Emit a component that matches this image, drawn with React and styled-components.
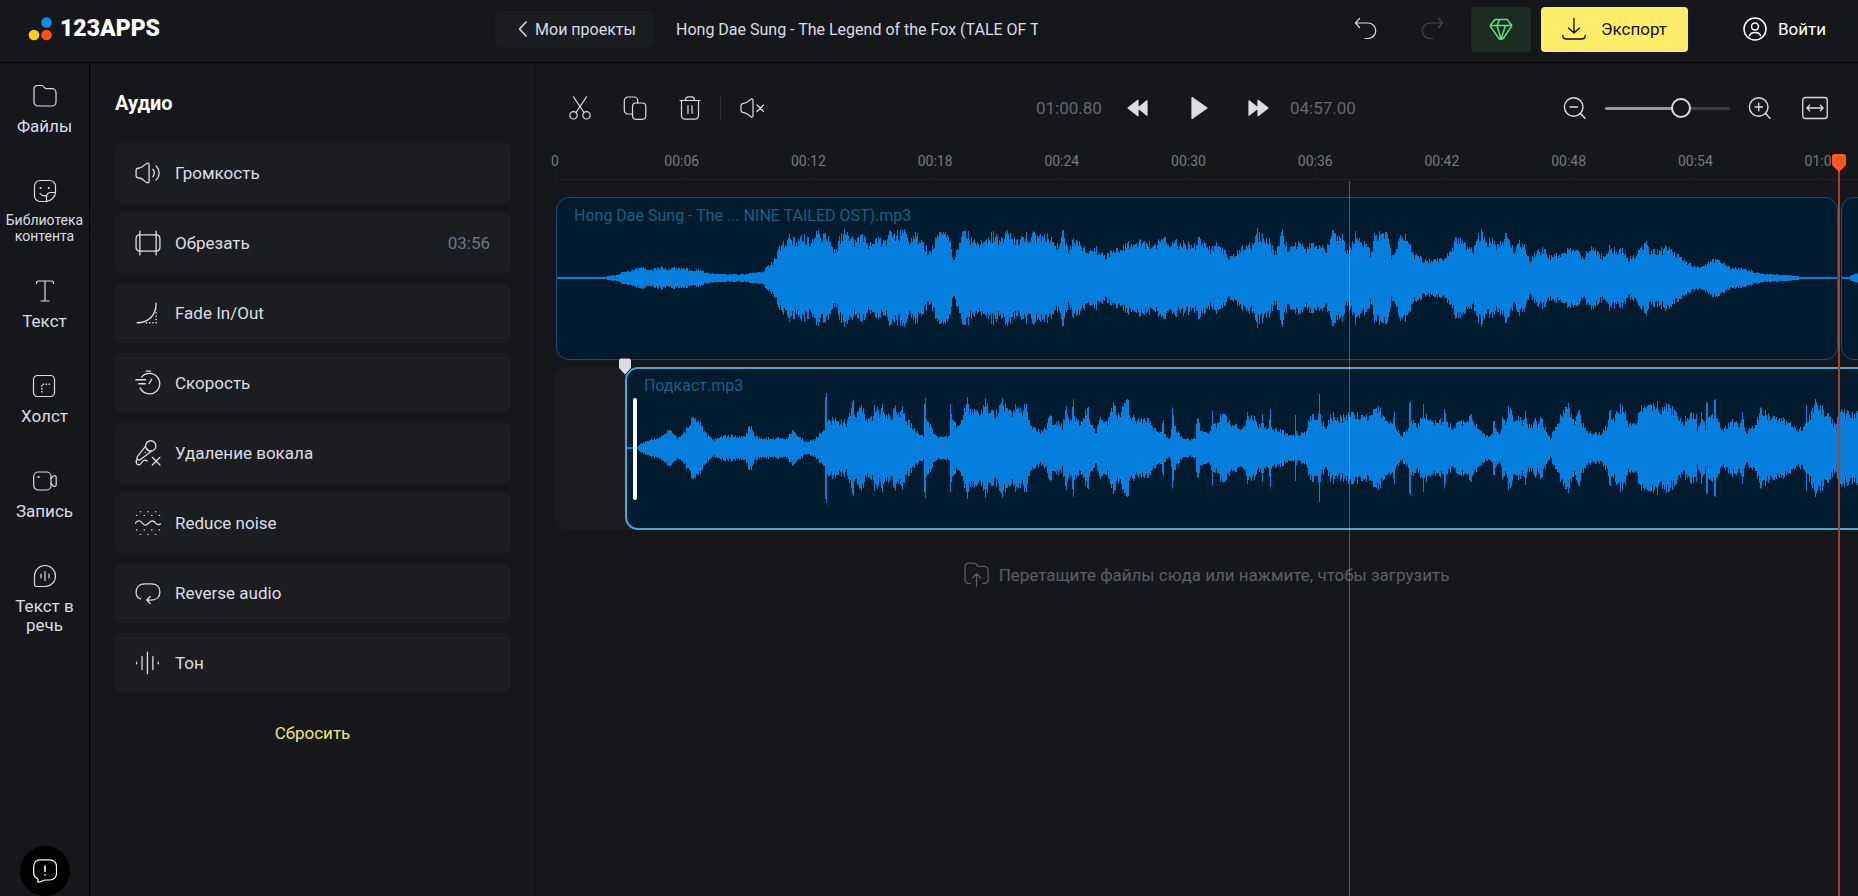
import React from 'react';
import styled, { createGlobalStyle, css } from 'styled-components';

const SPAN = 61.7; // seconds that fit into the visible lane
const STEP = 6;
const CLIP_SECONDS = 60.7;
const OFFSET_SECONDS = 3.26;
const PLAYHEAD = 60.8;
const HOVER = 37.62;

const percent = seconds => `${(seconds / SPAN) * 100}%`;

const GlobalStyle = createGlobalStyle`
  * {
    box-sizing: border-box;
  }

  body {
    margin: 0;
    background: #16171b;
    color: #dcdde4;
    font-family: Roboto, "Open Sans", sans-serif;
    font-size: 17px;
  }

  button,
  input {
    font: inherit;
    color: inherit;
  }
`;

const bareButton = css`
  border: 0;
  padding: 0;
  background: none;
  cursor: pointer;
`;

const Page = styled.div`
  display: flex;
  flex-direction: column;
  height: 100vh;
  overflow: hidden;
`;

const Header = styled.header`
  display: flex;
  align-items: center;
  flex: none;
  padding-bottom: 4px;
  height: 63px;
  border-bottom: 1px solid #000;
`;

const Logo = styled.a`
  display: flex;
  align-items: center;
  gap: 8px;
  flex: 0 0 495px;
  padding-left: 28px;
  color: #fff;
  font-size: 23px;
  font-weight: 900;
  line-height: 28px;
  text-decoration: none;
`;

const ProjectsLink = styled.a`
  display: flex;
  align-items: center;
  justify-content: center;
  gap: 8px;
  flex: 0 0 159px;
  height: 36px;
  padding-left: 5px;
  border-radius: 5px;
  background: #1b1c1f;
  color: inherit;
  font-size: 16px;
  text-decoration: none;
`;

const ProjectName = styled.input`
  flex: 0 1 384px;
  min-width: 0;
  margin-right: auto;
  padding: 0 0 0 22px;
  border: 0;
  outline: 0;
  background: none;
  font-size: 16px;
`;

const History = styled.div`
  display: flex;
  gap: 42px;
  padding: 0 27px;
`;

const IconButton = styled.button`
  ${bareButton}
  display: flex;
  color: ${p => (p.disabled ? '#46474b' : '#dcdde4')};
`;

const PremiumButton = styled.button`
  ${bareButton}
  display: flex;
  align-items: center;
  justify-content: center;
  width: 60px;
  height: 45px;
  border-radius: 4px;
  background: #1d2c23;
  color: #60e47f;
`;

const ExportButton = styled.button`
  ${bareButton}
  display: flex;
  align-items: center;
  justify-content: center;
  gap: 15px;
  width: 147px;
  height: 45px;
  margin-left: 10px;
  border-radius: 4px;
  background: #ffec69;
  color: #141414;
`;

const LoginLink = styled.a`
  display: flex;
  align-items: center;
  gap: 11px;
  flex: 0 0 170px;
  padding-left: 55px;
  color: #fff;
  text-decoration: none;
`;

const Body = styled.div`
  display: flex;
  flex: 1;
  min-height: 0;
`;

const Sidebar = styled.nav`
  display: flex;
  flex-direction: column;
  align-items: center;
  flex: 0 0 90px;
  padding-top: 21px;
  border-right: 1px solid #000;
`;

const SideLink = styled.button`
  ${bareButton}
  display: flex;
  flex-direction: column;
  align-items: center;
  gap: 9px;
  padding-bottom: ${p => (p.$small ? '35px' : '43px')};
  font-size: ${p => (p.$small ? '14px' : '17px')};
  line-height: ${p => (p.$small ? '16px' : '19px')};
`;

const SideLabel = styled.span`
  max-width: 84px;
  text-align: center;
`;

const Feedback = styled.button`
  ${bareButton}
  display: flex;
  align-items: center;
  justify-content: center;
  width: 50px;
  height: 50px;
  margin-top: auto;
  border-radius: 50%;
  background: #000;
  color: #fff;
`;

const Panel = styled.aside`
  display: flex;
  flex-direction: column;
  gap: 10px;
  flex: 0 0 445px;
  padding: 28px 24px 0 25px;
  border-right: 1px solid #0c0c0e;
`;

const PanelTitle = styled.h1`
  margin: 0 0 18px;
  color: #fff;
  font-size: 20px;
  font-weight: 700;
  line-height: 24px;
`;

const Option = styled.button`
  ${bareButton}
  display: flex;
  align-items: center;
  gap: 14px;
  height: 60px;
  padding: 0 20px;
  border-radius: 6px;
  background: #1c1d20;
  text-align: left;
`;

const OptionValue = styled.span`
  margin-left: auto;
  color: #6c757e;
`;

const Reset = styled.button`
  ${bareButton}
  align-self: center;
  margin-top: 19px;
  color: #f3e76d;
  line-height: 22px;
`;

const Editor = styled.main`
  display: flex;
  flex-direction: column;
  flex: 1;
  min-width: 0;
  overflow: hidden;
`;

const Toolbar = styled.div`
  display: grid;
  grid-template-columns: 1fr auto 1fr;
  align-items: center;
  flex: none;
  height: 90px;
  padding: 0 30px 0 33px;
`;

const Tools = styled.div`
  display: flex;
  align-items: center;
  gap: 31px;
`;

const MuteBox = styled.div`
  display: flex;
  align-items: center;
  height: 25px;
  margin-left: -13px;
  padding-left: 19px;
  border-left: 1px solid #2b2c30;
`;

const Transport = styled.div`
  display: flex;
  align-items: center;
  gap: 36px;
`;

const Time = styled.span`
  width: 70px;
  margin: ${p => (p.$end ? '0 0 0 -17px' : '0 -15px 0 0')};
  color: #66686c;
`;

const Zoom = styled.div`
  display: flex;
  align-items: center;
  justify-content: flex-end;
  gap: 18px;
`;

const FitButton = styled(IconButton)`
  margin-left: 12px;
`;

const Slider = styled.input`
  width: 125px;
  height: 20px;
  margin: 0;
  appearance: none;
  background: none;

  &::-webkit-slider-runnable-track {
    height: 3px;
    border-radius: 2px;
    background: linear-gradient(to right, #97989d 60%, #3b3c40 60%);
  }

  &::-webkit-slider-thumb {
    width: 20px;
    height: 20px;
    margin-top: -9px;
    appearance: none;
    border: 2px solid #dcdde4;
    border-radius: 50%;
    background: #16171b;
  }
`;

const Timeline = styled.section`
  position: relative;
  flex: 1;
  margin-left: 20px;
`;

const Ruler = styled.div`
  display: flex;
  height: 27px;
  border-bottom: 1px solid #222327;
  color: #77797e;
  font-size: 14px;
  line-height: 16px;
`;

const Tick = styled.div`
  display: flex;
  flex-direction: column;
  flex-grow: 0;
  flex-shrink: 0;

  &::after {
    content: '';
    width: 1px;
    height: 4px;
    margin-top: auto;
    background: #222327;
  }
`;

const TickLabel = styled.span`
  display: flex;
  justify-content: center;
  width: 0;
`;

const Lane = styled.div`
  display: flex;
  gap: 2px;
  margin-top: ${p => (p.$first ? '17px' : '7px')};
  margin-right: -20px;
  border-radius: 12px;
  background: ${p => (p.$first ? 'none' : '#1b1c1f')};
`;

const Clip = styled.article`
  position: relative;
  flex-grow: ${p => (p.$rest ? 1 : 0)};
  flex-shrink: 0;
  height: 163px;
  margin-left: ${p => (p.$selected ? '0' : '1px')};
  padding-top: ${p => (p.$selected ? '7px' : '8px')};
  border: ${p => (p.$selected ? '2px solid #3fa9dc' : '1px solid #0c5380')};
  border-radius: 13px;
  background: #001b2e;
`;

const ClipName = styled.h2`
  height: 20px;
  margin: 0;
  padding-left: 17px;
  color: #165f84;
  font-size: 16px;
  font-weight: 400;
  line-height: 20px;
`;

const WaveSvg = styled.svg`
  display: block;
  width: 100%;
  height: 104px;
  overflow: visible;
  fill: #047fde;
`;

const TrimHandle = styled.span`
  position: absolute;
  left: 6px;
  top: 29px;
  width: 4px;
  height: 102px;
  border-radius: 2px;
  background: #fff;
`;

const Marker = styled.svg`
  position: absolute;
  left: -10px;
  top: -12px;
`;

const DropButton = styled.button`
  ${bareButton}
  display: flex;
  align-items: center;
  gap: 10px;
  margin: 32px auto 0;
  color: #5d5f64;
  line-height: 24px;
`;

const HoverLine = styled.div`
  position: absolute;
  top: 28px;
  bottom: 0;
  width: 1px;
  background: rgba(255, 255, 255, 0.28);
`;

const Playhead = styled.div`
  position: absolute;
  top: 1px;
  bottom: 0;
  width: 14px;
  margin-left: -7px;
  background: linear-gradient(#a8432b, #a8432b) center / 2px 100% no-repeat;
`;

const Svg = ({ size = 24, children }) => (
  <svg
    width={size}
    height={size}
    viewBox="0 0 24 24"
    fill="none"
    stroke="currentColor"
    strokeWidth="1.2"
    strokeLinecap="round"
    strokeLinejoin="round"
    aria-hidden="true"
  >
    {children}
  </svg>
);

const SPEAKER = 'M1 9.5C1 8.3 1.7 7.7 2.8 7.6c2.6-.2 4.6-1.3 6.6-3.3.9-.9 1.5-1.5 2.4-1.5.8 0 1.2.5 1.2 1.5v15.4c0 1-.4 1.5-1.2 1.5-.9 0-1.5-.6-2.4-1.5-2-2-4-3.1-6.6-3.3C1.7 16.3 1 15.700 1 14.500Z';

const icons = {
  folder: <path d="M1 5a3.500 3.500 0 0 1 3.500-3.500h4.300c1.200 0 1.700.6 2.200 1.500.6 1 1.200 1.700 2.500 1.700h5.500A4 4 0 0 1 23 8.700V18a4 4 0 0 1-4 4H5a4 4 0 0 1-4-4Z" />,
  sticker: (
    <>
      <path d="M13.500 22.500H7A5.500 5.500 0 0 1 1.500 17V7A5.500 5.500 0 0 1 7 1.500h10A5.500 5.500 0 0 1 22.500 7v6.500c0 4-5 9-9 9Z" />
      <path d="M13.500 22.500v-4.700c0-2.600 1.700-4.300 4.300-4.300h4.700M7 14.500c1.300 1.800 3.500 2.700 6 2.200" />
      <path d="M7.500 9h.1M15.800 9h.1" strokeWidth="2" />
    </>
  ),
  text: <path d="M3.500 4.500V4A2 2 0 0 1 5.500 2h13a2 2 0 0 1 2 2v.5M12 2v20M8 22h8" />,
  canvas: (
    <>
      <rect x="1.500" y="1.500" width="21" height="21" rx="4" />
      <path d="M9.800 18.500v-8.200h9" strokeDasharray="1.500 1.500" strokeWidth="1.500" strokeLinecap="butt" />
    </>
  ),
  record: (
    <>
      <rect x="0.700" y="3" width="17.300" height="18" rx="4.500" />
      <path d="M18 9.500c1.200-.6 1.700-3 3.300-3 1.300 0 1.900.9 1.900 2.200v6.600c0 1.300-.6 2.200-1.900 2.200-1.600 0-2.100-2.400-3.300-3" />
      <path d="M5.500 8h.1" strokeWidth="2.200" />
    </>
  ),
  speech: (
    <>
      <path d="M1.500 12a10.500 10.500 0 1 1 10.500 10.500H3.500a2 2 0 0 1-2-2Z" />
      <path d="M8 10v4M12 7.500v9M16 10v4" />
    </>
  ),
  feedback: (
    <>
      <path d="M7 .800h10A6.500 6.500 0 0 1 23.500 7v7.500A6.500 6.500 0 0 1 17 21h-4.500c-2.500 0-4 2.200-6.800 2.200-1.200 0-1.400-.7-.9-1.500.4-.7.600-1.500-.500-2.200A6 6 0 0 1 .700 14.500V7A6.300 6.300 0 0 1 7 .800Z" />
      <path d="M12 7v5.500M12 15.800v.1" strokeWidth="1.600" />
    </>
  ),
  volume: (
    <>
      <path d={SPEAKER} />
      <path d="M16.500 8.500c1.500 2 1.500 5 0 7M19.500 5.500c3.700 3.700 3.700 9.300 0 13" />
    </>
  ),
  trim: (
    <>
      <path d="M4.500 1v22M19.500 1v22M4.500 4.500h15M4.500 19.500h15" />
      <path d="M4.500 4.500C2 4.500 1 5.500 1 8v8c0 2.500 1 3.500 3.500 3.500M19.500 4.500C22 4.500 23 5.500 23 8v8c0 2.500-1 3.500-3.500 3.500" />
    </>
  ),
  fade: (
    <>
      <path d="M2 21c10.500 0 17.500-7 17.500-18" />
      <path d="M10 21h9.500V9" strokeDasharray="1.300 1.700" strokeLinecap="butt" strokeWidth="1.400" />
    </>
  ),
  speed: <path d="M6 6.500a9.500 9.500 0 1 1-1.300 10M10.500 1h4M.800 9h9M3.500 12.700h6M13 12.500l2.500-4" />,
  vocal: (
    <>
      <circle cx="14.500" cy="5.500" r="4.800" />
      <path d="M10 5.500 2.200 15.300c-.8 1.100-.6 2 .1 2.600.700.700 1.800.800 2.700.100L15.500 10.200M11 8c.6 1.600 1.500 2.300 3.200 2.500M9.500 11.500h.1" />
      <path d="M2 17.500c-1.500 2-1 5.500 1.500 5.500 3 0 2.500-4.500 5.500-4.500 1 0 1.700.3 2.300 1M16 16l7 7M23 16l-7 7" />
    </>
  ),
  noise: (
    <>
      <path d="M0 12.300c3-3.300 5-2.500 7 0s3.500 2 6-.500 4.500-2 6 .200 2.800 1.800 4.500.800" />
      <path
        d="M5 1.500h.1M12 1.500h.1M19 1.500h.1M1.500 5h.1M8.500 5h.1M15.500 5h.1M22.500 5h.1M1.500 18.500h.1M8.500 18.500h.1M15.500 18.500h.1M22.500 18.500h.1M5 22.500h.1M12 22.500h.1M19 22.500h.1"
        strokeWidth="1.300"
      />
    </>
  ),
  reverse: <path d="M5 17.500c-2.500-.8-4-2.500-4-6C1 6.500 4 3.500 9 3.500h6c5 0 8 3 8 7.500s-3 7.500-8 7.500h-4M14 15.300 10.800 18.500l3.200 3.200" />,
  tone: <path d="M1.500 11.300v1.400M6.500 6v12M11.500 2v20M16.500 6v12M21.500 11.300v1.400" />,
  back: <path d="M8 5 1.500 12 8 19" strokeWidth="1.500" />,
  undo: <path d="M5.500 1.500 1.500 6l4 4.500M1.500 6H14a7.300 7.300 0 0 1 0 15.500h-3" />,
  redo: <path d="M18.500 1.500l4 4.500-4 4.500M22.500 6H10a7.300 7.300 0 0 0 0 15.500h3" />,
  diamond: (
    <path
      d="M6 2.500h12L22.500 8c.4.600.3 1-.1 1.600L14.500 21c-1.200 1.700-3.800 1.700-5 0L1.600 9.600C1.200 9 1.100 8.600 1.500 8ZM1.500 8.500h21M8 8.500l2.500-6M8 8.500l4 13.500 4.500-13.500"
      strokeWidth="1.500"
    />
  ),
  download: <path d="M12 1.500v14.500M6.500 11l5.500 5 5.500-5M.800 18.500c0 2.300 1 3.500 3.500 3.500h15.400c2.500 0 3.500-1.200 3.500-3.500" strokeWidth="1.400" />,
  user: (
    <g strokeWidth="1.500">
      <circle cx="12" cy="12" r="11" />
      <circle cx="12" cy="9.500" r="3.500" />
      <path d="M6.500 18.500c1.500-4 9.500-4 11 0" />
    </g>
  ),
  cut: (
    <>
      <circle cx="5.500" cy="19.300" r="3.700" />
      <circle cx="18.500" cy="19.300" r="3.700" />
      <path d="M5.500.800 16 16.500M18.500.800 8 16.500" />
    </>
  ),
  copy: (
    <>
      <rect x="9.500" y="7" width="13.300" height="16.300" rx="3.500" />
      <path d="M9.500 18H5a3.700 3.700 0 0 1-3.700-3.700v-9.600A3.700 3.700 0 0 1 5 1h6a3.700 3.700 0 0 1 3.700 3.700V7" />
    </>
  ),
  trash: (
    <path d="M2 4.500h20M3.500 4.500v15a3.700 3.700 0 0 0 3.700 3.700h9.600a3.700 3.700 0 0 0 3.700-3.700v-15M7.500 4.500c0-2.300 1-3.700 3-3.700h3c2 0 3 1.400 3 3.700M10 9.500v8M14 9.500v8" />
  ),
  mute: (
    <>
      <path d={SPEAKER} />
      <path d="M17 9l6.500 6.500M23.500 9 17 15.500" />
    </>
  ),
  prev: <path d="M1 12 11 4.300v15.400ZM11 12l9-7.200v14.400Z" fill="currentColor" />,
  play: <path d="M5 1.500 20 12 5 22.500Z" fill="currentColor" />,
  next: <path d="M21 12 11 4.300v15.400ZM11 12 2 4.800v14.400Z" fill="currentColor" />,
  zoomOut: <path d="M20 11a9.300 9.300 0 1 1-18.600 0 9.300 9.300 0 0 1 18.600 0ZM17.500 17.500 22 22.200M7 11h7.500" strokeWidth="1.400" />,
  zoomIn: <path d="M20 11a9.300 9.300 0 1 1-18.600 0 9.300 9.300 0 0 1 18.600 0ZM17.500 17.500 22 22.200M7 11h7.500M10.700 7.200v7.500" strokeWidth="1.400" />,
  fit: (
    <>
      <rect x="0.700" y="2.300" width="22.600" height="19.400" rx="2.500" />
      <path d="M4.500 12h15M7 9.300 4.500 12 7 14.700M17 9.300l2.500 2.700-2.500 2.700" />
    </>
  ),
  upload: (
    <path d="M6 20.500H4.500A3.500 3.500 0 0 1 1 17V4.500A3.500 3.500 0 0 1 4.500 1h5c1.200 0 1.700.5 2.200 1.300.6 1 1.200 1.900 2.500 1.900h5a4 4 0 0 1 4 4V17a3.500 3.500 0 0 1-3.500 3.500H18M12 23.500v-12M8 15.300l4-4 4 4" />
  ),
};

const Icon = ({ name, size }) => <Svg size={size}>{icons[name]}</Svg>;

// Peaks are "position:height" pairs, position in samples of the given rate.
const parsePeaks = (start, rate, text) =>
  text.trim().split(/\s+/).map((pair) => {
    const [x, h] = pair.split(':').map(Number);
    return [start + (x / rate), h];
  });

const SONG = [
  ...parsePeaks(-27, 2.34, `
    61:1 175:1 180:2 200:3 215:6 240:8 262:11 285:9 310:11 325:9 337:11 350:9 372:9 400:8 415:5 450:4 505:4
    525:6 545:6 555:13 570:17 580:29 590:33 600:38 605:45 612:38 640:41 660:36 670:48 680:41 700:41 710:28
    717:31 725:42 735:49 745:43 760:36 775:41 795:35 810:38 830:36 840:47 860:43 875:48 885:39 905:43 920:34
    935:26 945:36 955:44 968:47 980:41 990:20 1000:29 1010:48 1025:43 1040:35 1060:35 1085:45 1100:38 1120:48
    1130:39 1150:42 1180:43 1210:44 1220:38 1235:32 1250:48 1262:24 1270:38 1285:35 1305:27 1325:30 1347:21
    1365:30 1390:31 1405:37 1430:36 1470:35 1490:38 1530:35 1560:34`),
  ...parsePeaks(633, 2.347, `
    0:30 12:40 40:36 50:28 65:37 80:28 95:20 115:27 130:33 148:33 155:46 170:43 185:39 200:26 208:30 218:45
    230:30 245:33 260:38 270:30 300:36 320:26 330:44 338:49 350:41 360:43 370:28 380:31 390:46 405:35 415:38
    425:25 435:43 453:48 465:41 475:21 485:31 500:44 510:40 525:24 555:18 590:19 615:26 625:39 640:36 655:30
    668:30 675:43 690:46 700:36 712:40 722:31 735:38 743:47 755:37 762:24 770:37 785:35 800:18 815:26 835:31
    845:21 865:23 885:29 910:28 925:20 940:32 960:25 975:20 985:32 1000:29 1018:30 1030:19 1045:24 1060:30
    1072:37 1080:26 1100:27 1125:31 1140:25 1160:19 1175:14 1190:12 1205:12 1220:17 1238:20 1250:15 1270:11
    1300:9 1330:6 1350:4 1400:3 1430:2 1432:1 1521:1`),
];

const SONG_TAIL = parsePeaks(0, 1, '0:1 6:1 12:4 18:6 30:9 38:10');

const PODCAST = [
  ...parsePeaks(-97, 2.34, `
    222:1 252:1 253:3 265:6 290:10 310:12 325:19 335:14 345:9 360:16 370:25 382:32 390:28 400:25 410:15 430:8
    440:13 460:12 480:13 500:11 515:23 525:11 560:10 600:10 610:17 630:12 642:6 665:9 680:15 689:20 690:54
    693:54 695:30 715:28 740:26 748:35 755:47 760:34 775:45 782:32 800:30 808:46 815:34 822:43 830:34 845:32
    855:40 862:33 870:45 878:30 890:25 905:17 921:10 922:49 925:49 927:25 935:23 945:13 975:11 981:11 982:41
    985:41 988:27 1005:22 1015:38 1023:50 1030:36 1055:38 1065:46 1075:38 1090:35 1100:46 1103:51 1110:42
    1125:36 1135:43 1150:37 1157:49 1163:35 1175:21 1190:17 1208:19 1215:39 1222:22 1235:26 1245:22 1253:43
    1260:28 1267:30 1270:52 1275:30 1290:25 1305:45 1312:25 1325:15 1333:38 1342:23 1350:27 1365:48 1375:33
    1385:38 1397:52 1405:32 1425:28 1445:29 1455:22 1465:18 1478:16 1480:40 1483:16 1490:10 1499:12 1502:41
    1506:24 1510:20 1525:11 1545:9 1557:11 1560:35 1566:23`),
  ...parsePeaks(563, 2.347, `
    0:9 12:10 15:35 22:21 40:16 49:16 51:48 54:24 65:25 75:40 85:33 95:21 130:23 135:37 150:30 165:21 168:37
    175:20 185:24 187:41 190:21 210:19 225:15 244:13 246:35 249:14 270:15 280:31 295:33 300:25 301:54 304:54
    305:31 320:20 330:35 350:30 370:33 400:33 420:33 440:44 450:31 465:30 476:24 478:40 481:20 497:14 513:21
    514:47 517:47 518:28 535:25 544:30 546:45 549:34 565:28 593:28 596:40 600:28 615:22 640:27 660:32 670:23
    685:15 700:11 709:14 712:40 717:18 728:14 733:38 740:21 748:43 758:31 775:29 780:22 785:38 790:23 803:21
    808:30 815:22 823:31 835:18 845:10 855:21 870:33 885:45 893:33 903:28 912:43 920:25 935:16 965:16 980:23
    985:41 993:28 1003:44 1020:36 1025:25 1045:26 1060:42 1075:42 1092:46 1105:38 1120:43 1140:35 1155:26
    1170:36 1188:34 1190:18 1200:35 1210:20 1211:49 1214:49 1216:31 1228:33 1229:51 1232:51 1234:31 1250:17
    1270:27 1290:23 1296:36 1303:15 1318:21 1328:25 1335:38 1345:38 1360:33 1385:31 1405:26 1425:17 1443:23
    1445:45 1448:28 1468:46 1480:40 1495:38 1510:23 1520:30 1530:37 1550:33 1568:34 1620:30`),
];

const wavePath = (peaks) => {
  const end = Math.floor(peaks[peaks.length - 1][0]);
  let seg = 0;
  let d = '';
  for (let x = 0; x < end; x += 1) {
    while (seg < peaks.length - 2 && peaks[seg + 1][0] <= x) seg += 1;
    const [x0, h0] = peaks[seg];
    const [x1, h1] = peaks[seg + 1];
    const k = Math.min(1, Math.max(0, (x - x0) / ((x1 - x0) || 1)));
    const base = h0 + ((h1 - h0) * k);
    const noise = Math.abs(Math.sin((x + 1) * 78.233) * 43758.5453) % 1;
    // tall spikes keep their full height, the rest gets a ragged edge
    const ragged = base > 46 ? 1.04 - (noise * 0.12) : 1.1 - (noise * 0.3);
    const h = base < 2 ? 1 : Math.max(2, Math.round(base * ragged));
    d += `M${x} ${52 - h}h1v${h * 2}h-1z`;
  }
  return { d, end };
};

const Wave = ({ peaks }) => {
  const { d, end } = wavePath(peaks);
  return (
    <WaveSvg viewBox={`0 0 ${end} 104`} preserveAspectRatio="none" shapeRendering="crispEdges">
      <path d={d} />
    </WaveSvg>
  );
};

const sections = [
  { icon: 'folder', label: 'Файлы' },
  { icon: 'sticker', label: 'Библиотека контента', small: true },
  { icon: 'text', label: 'Текст' },
  { icon: 'canvas', label: 'Холст' },
  { icon: 'record', label: 'Запись' },
  { icon: 'speech', label: 'Текст в речь' },
];

const options = [
  { icon: 'volume', label: 'Громкость' },
  { icon: 'trim', label: 'Обрезать', value: '03:56' },
  { icon: 'fade', label: 'Fade In/Out' },
  { icon: 'speed', label: 'Скорость' },
  { icon: 'vocal', label: 'Удаление вокала' },
  { icon: 'noise', label: 'Reduce noise' },
  { icon: 'reverse', label: 'Reverse audio' },
  { icon: 'tone', label: 'Тон' },
];

const tickText = (i) => {
  if (i === 0) return '0';
  const s = i * STEP;
  return `${String(Math.floor(s / 60)).padStart(2, '0')}:${String(s % 60).padStart(2, '0')}`;
};

const TopBar = () => (
  <Header>
    <Logo href="#home">
      <svg width="24" height="26" viewBox="0 0 24 26" aria-hidden="true">
        <circle cx="18.500" cy="6.500" r="5.300" fill="#0e8af0" />
        <circle cx="6" cy="19" r="5.300" fill="#ffd010" />
        <circle cx="18.500" cy="19" r="5.300" fill="#ff5008" />
      </svg>
      123APPS
    </Logo>
    <ProjectsLink href="#projects">
      <svg width="9" height="16" viewBox="0 4 9 16" fill="none" stroke="currentColor" strokeLinecap="round" strokeLinejoin="round" aria-hidden="true">
        {icons.back}
      </svg>
      Мои проекты
    </ProjectsLink>
    <ProjectName
      type="text"
      aria-label="Название проекта"
      defaultValue="Hong Dae Sung - The Legend of the Fox (TALE OF THE NINE TAILED OST)"
    />
    <History>
      <IconButton type="button" aria-label="Отменить"><Icon name="undo" /></IconButton>
      <IconButton type="button" aria-label="Повторить" disabled><Icon name="redo" /></IconButton>
    </History>
    <PremiumButton type="button" aria-label="Премиум"><Icon name="diamond" /></PremiumButton>
    <ExportButton type="button"><Icon name="download" />Экспорт</ExportButton>
    <LoginLink href="#login"><Icon name="user" />Войти</LoginLink>
  </Header>
);

const EditorToolbar = () => (
  <Toolbar>
    <Tools>
      <IconButton type="button" aria-label="Разрезать"><Icon name="cut" /></IconButton>
      <IconButton type="button" aria-label="Дублировать"><Icon name="copy" /></IconButton>
      <IconButton type="button" aria-label="Удалить"><Icon name="trash" /></IconButton>
      <MuteBox>
        <IconButton type="button" aria-label="Без звука"><Icon name="mute" /></IconButton>
      </MuteBox>
    </Tools>
    <Transport>
      <Time>01:00.80</Time>
      <IconButton type="button" aria-label="Назад"><Icon name="prev" /></IconButton>
      <IconButton type="button" aria-label="Воспроизвести"><Icon name="play" /></IconButton>
      <IconButton type="button" aria-label="Вперёд"><Icon name="next" /></IconButton>
      <Time $end>04:57.00</Time>
    </Transport>
    <Zoom>
      <IconButton type="button" aria-label="Уменьшить"><Icon name="zoomOut" /></IconButton>
      <Slider type="range" min="0" max="100" defaultValue="63" aria-label="Масштаб" />
      <IconButton type="button" aria-label="Увеличить"><Icon name="zoomIn" /></IconButton>
      <FitButton type="button" aria-label="По ширине"><Icon name="fit" size={26} /></FitButton>
    </Zoom>
  </Toolbar>
);

class App extends React.Component {
  render() {
    return (
      <Page>
        <GlobalStyle />
        <TopBar />
        <Body>
          <Sidebar>
            {sections.map(({ icon, label, small }) => (
              <SideLink type="button" key={icon} $small={small}>
                <Icon name={icon} />
                <SideLabel>{label}</SideLabel>
              </SideLink>
            ))}
            <Feedback type="button" aria-label="Обратная связь"><Icon name="feedback" /></Feedback>
          </Sidebar>

          <Panel>
            <PanelTitle>Аудио</PanelTitle>
            {options.map(({ icon, label, value }) => (
              <Option type="button" key={icon}>
                <Icon name={icon} size={26} />
                {label}
                {value && <OptionValue>{value}</OptionValue>}
              </Option>
            ))}
            <Reset type="button">Сбросить</Reset>
          </Panel>

          <Editor>
            <EditorToolbar />
            <Timeline>
              <Ruler>
                {Array.from({ length: 11 }, (_, i) => (
                  <Tick key={i} style={{ flexBasis: percent(STEP) }}>
                    <TickLabel>{tickText(i)}</TickLabel>
                  </Tick>
                ))}
              </Ruler>

              <Lane $first>
                <Clip style={{ width: `calc(${percent(CLIP_SECONDS)} - 20px)` }}>
                  <ClipName>Hong Dae Sung - The ... NINE TAILED OST).mp3</ClipName>
                  <Wave peaks={SONG} />
                </Clip>
                <Clip $rest>
                  <ClipName />
                  <Wave peaks={SONG_TAIL} />
                </Clip>
              </Lane>

              <Lane>
                <Clip $selected $rest style={{ marginLeft: percent(OFFSET_SECONDS) }}>
                  <ClipName>Подкаст.mp3</ClipName>
                  <Wave peaks={PODCAST} />
                  <TrimHandle />
                  <Marker width="16" height="20" viewBox="0 0 16 20" aria-hidden="true">
                    <path
                      d="M4 1h8a2.500 2.500 0 0 1 2.500 2.500V11L8 18 1.500 11V3.500A2.500 2.500 0 0 1 4 1Z"
                      fill="#dcdde4"
                      stroke="#101114"
                    />
                  </Marker>
                </Clip>
              </Lane>

              <DropButton type="button">
                <Icon name="upload" size={25} />
                Перетащите файлы сюда или нажмите, чтобы загрузить
              </DropButton>

              <HoverLine style={{ left: percent(HOVER) }} />
              <Playhead style={{ left: percent(PLAYHEAD) }}>
                <svg width="14" height="18" viewBox="0 0 14 18" aria-hidden="true">
                  <path d="M2.500 0h9A2.500 2.500 0 0 1 14 2.500V11L7 18 0 11V2.500A2.500 2.500 0 0 1 2.500 0Z" fill="#ff5722" />
                </svg>
              </Playhead>
            </Timeline>
          </Editor>
        </Body>
      </Page>
    );
  }
}

export default App;
